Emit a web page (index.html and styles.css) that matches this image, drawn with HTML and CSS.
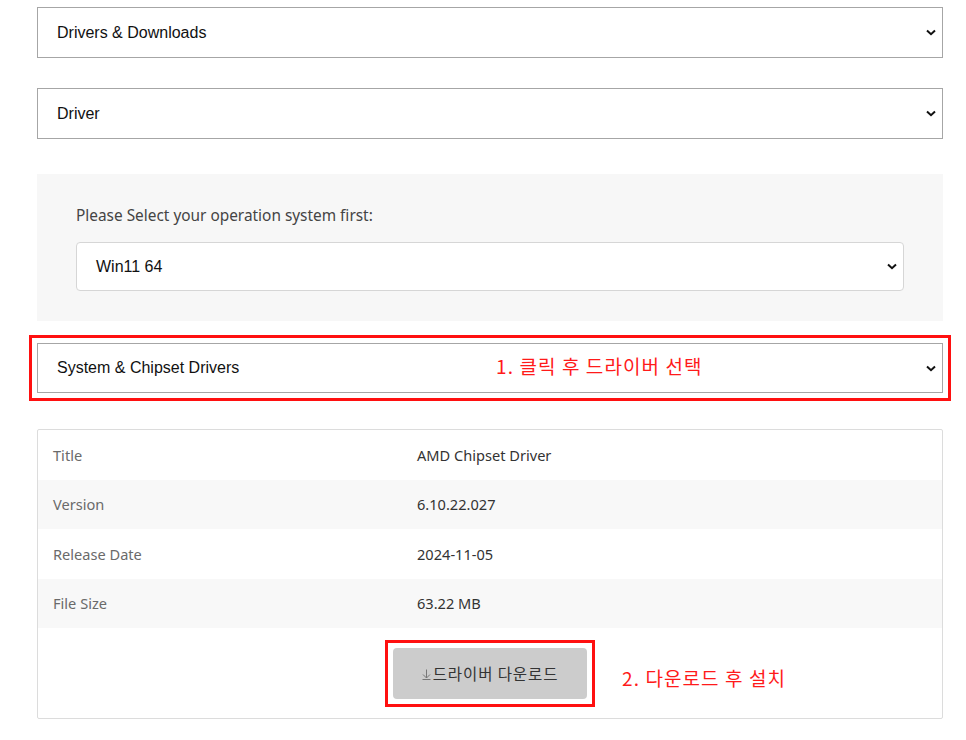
FILE: index.html
```html
<!DOCTYPE html>
<html>
    <head>
        <meta charset="UTF-8" />
        <title>Drivers &amp; Downloads</title>
        <link rel="stylesheet" href="styles.css">
    </head>
    <body>
        <div class="page">
            <div class="select">
                <span>Drivers &amp; Downloads</span>
                <svg class="chev" width="10" height="7" viewBox="0 0 10 7"><path d="M1 1.5 L5 5.2 L9 1.5" fill="none" stroke="#111" stroke-width="2"/></svg>
            </div>
            <div class="select">
                <span>Driver</span>
                <svg class="chev" width="10" height="7" viewBox="0 0 10 7"><path d="M1 1.5 L5 5.2 L9 1.5" fill="none" stroke="#111" stroke-width="2"/></svg>
            </div>

            <div class="osPanel">
                <div class="osLabel">Please Select your operation system first:</div>
                <div class="select osSelect">
                    <span>Win11 64</span>
                    <svg class="chev" width="10" height="7" viewBox="0 0 10 7"><path d="M1 1.5 L5 5.2 L9 1.5" fill="none" stroke="#111" stroke-width="2"/></svg>
                </div>
            </div>

            <div class="mark markWide">
                <div class="select">
                    <span>System &amp; Chipset Drivers</span>
                    <svg class="chev" width="10" height="7" viewBox="0 0 10 7"><path d="M1 1.5 L5 5.2 L9 1.5" fill="none" stroke="#111" stroke-width="2"/></svg>
                </div>
                <span class="note note1">1. 클릭 후 드라이버 선택</span>
            </div>

            <div class="infoTable">
                <div class="row">
                    <div class="key">Title</div>
                    <div class="val">AMD Chipset Driver</div>
                </div>
                <div class="row odd">
                    <div class="key">Version</div>
                    <div class="val">6.10.22.027</div>
                </div>
                <div class="row">
                    <div class="key">Release Date</div>
                    <div class="val">2024-11-05</div>
                </div>
                <div class="row odd">
                    <div class="key">File Size</div>
                    <div class="val">63.22 MB</div>
                </div>
                <div class="btnRow">
                    <div class="mark">
                        <button type="button" class="dlBtn">
                            <svg class="dlIcon" width="9" height="11" viewBox="0 0 9 11"><path d="M4.5 0.5 V9 M1 5.5 L4.5 9 L8 5.5 M0.5 10.5 H8.5" fill="none" stroke="#777" stroke-width="1"/></svg>드라이버 다운로드
                        </button>
                        <span class="note note2">2. 다운로드 후 설치</span>
                    </div>
                </div>
            </div>
        </div>
    </body>
</html>
```

FILE: styles.css
```css
body {
    margin: 0;
    background: #fff;
}
.page {
    width: 906px;
    padding: 7px 0 0 37px;
}
.select {
    display: flex;
    align-items: center;
    justify-content: space-between;
    box-sizing: border-box;
    height: 51px;
    padding: 0 6px 0 19px;
    border: 1px solid #a6a6a6;
    background: #fff;
    font-family: "Liberation Sans", Arial, sans-serif;
    font-size: 16px;
    color: #111;
    margin-bottom: 30px;
}
.chev {
    display: block;
}
.osPanel {
    margin-top: 35px;
    height: 147px;
    box-sizing: border-box;
    padding: 31px 39px 0 39px;
    background: #f7f7f7;
}
.osLabel {
    font-family: "Noto Sans", "Open Sans", sans-serif;
    font-size: 15.4px;
    color: #444;
    margin-bottom: 16px;
}
.osSelect {
    height: 49px;
    border: 1px solid #d6d6d6;
    border-radius: 4px;
    margin-bottom: 0;
}
.mark {
    position: relative;
    border: 3px solid #ff1010;
    padding: 5px;
}
.markWide {
    margin: 14px 0 0 -8px;
    width: 906px;
}
.markWide .select {
    height: 50px;
    margin-bottom: 0;
}
.note {
    position: absolute;
    font-family: "Noto Sans CJK KR", sans-serif;
    font-size: 19px;
    letter-spacing: 1.1px;
    color: #ff1a1a;
    white-space: nowrap;
}
.note1 {
    left: 464px;
    top: 14px;
}
.note2 {
    left: 234px;
    top: 21px;
}
.infoTable {
    margin-top: 28px;
    border: 1px solid #dcdcdc;
    border-radius: 2px;
    font-family: "Noto Sans", "Open Sans", sans-serif;
    font-size: 14.6px;
}
.row {
    display: flex;
    align-items: center;
    height: 49.5px;
}
.row.odd {
    background: #f8f8f8;
}
.key {
    width: 364px;
    padding-left: 15px;
    color: #6a6a6a;
}
.val {
    color: #333;
}
.btnRow {
    height: 90px;
    display: flex;
    justify-content: center;
    align-items: center;
}
.dlBtn {
    display: flex;
    align-items: center;
    justify-content: center;
    width: 194px;
    height: 51px;
    border: none;
    border-radius: 4px;
    background: #cccccc;
    color: #333;
    font-family: "Noto Sans CJK KR", sans-serif;
    font-size: 15.5px;
    letter-spacing: 0.9px;
}
.dlIcon {
    margin: 2px 2px 0 0;
}
```
